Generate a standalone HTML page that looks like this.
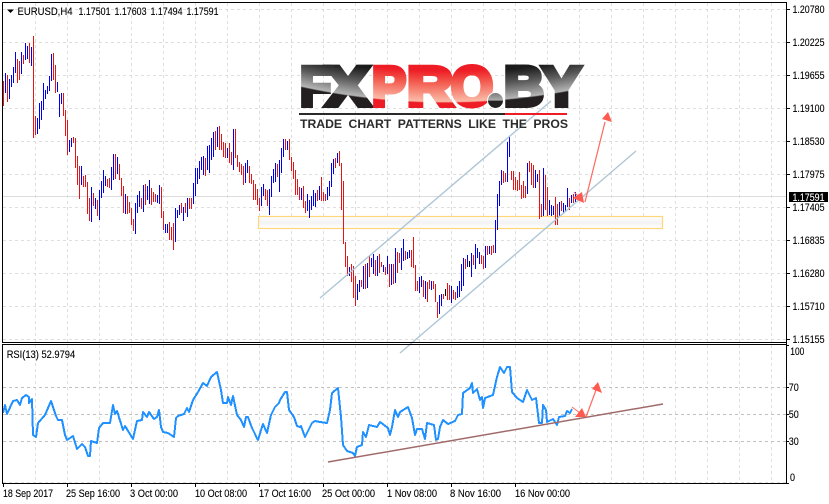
<!DOCTYPE html>
<html><head><meta charset="utf-8"><title>EURUSD H4</title>
<style>html,body{margin:0;padding:0;background:#fff;width:829px;height:504px;overflow:hidden}svg{display:block}text{font-family:"Liberation Sans",sans-serif;font-size:11.4px;fill:#000;stroke:#000;stroke-width:.12}</style></head>
<body>
<svg width="829" height="504" viewBox="0 0 829 504" xmlns="http://www.w3.org/2000/svg">
<defs>
<radialGradient id="gk" gradientUnits="userSpaceOnUse" cx="445" cy="-571" r="674"><stop offset=".955" stop-color="#1b1b1b"/><stop offset=".975" stop-color="#5a5a5a"/><stop offset=".998" stop-color="#b5b5b5"/><stop offset="1" stop-color="#231f20"/></radialGradient>
<radialGradient id="gr" gradientUnits="userSpaceOnUse" cx="445" cy="-571" r="674"><stop offset=".952" stop-color="#ee1c25"/><stop offset=".968" stop-color="#f2564a"/><stop offset=".998" stop-color="#fbbba8"/><stop offset="1" stop-color="#ee1c25"/></radialGradient>
<linearGradient id="gd" x1="0" y1="0" x2="0" y2="1"><stop offset="0" stop-color="#777"/><stop offset=".5" stop-color="#b0b0b0"/><stop offset=".52" stop-color="#222"/><stop offset="1" stop-color="#222"/></linearGradient>
<linearGradient id="gy" x1="0" y1="0" x2="0" y2="1"><stop offset="0" stop-color="#fff"/><stop offset=".5" stop-color="#f3f3f3"/><stop offset="1" stop-color="#fff"/></linearGradient>
</defs>
<!-- grid -->
<path d="M35.5 3V342M67.5 3V342M99.5 3V342M131.5 3V342M163.5 3V342M195.5 3V342M227.5 3V342M259.5 3V342M291.5 3V342M323.5 3V342M355.5 3V342M387.5 3V342M419.5 3V342M451.5 3V342M483.5 3V342M515.5 3V342M547.5 3V342M579.5 3V342M611.5 3V342M643.5 3V342M675.5 3V342M707.5 3V342M739.5 3V342M771.5 3V342M3 9.5H786M3 42.5H786M3 75.5H786M3 108.5H786M3 141.5H786M3 174.5H786M3 207.5H786M3 240.5H786M3 273.5H786M3 306.5H786M3 339.5H786" stroke="#dedede" fill="none" stroke-dasharray="3 3"/>
<path d="M35.5 345V483M67.5 345V483M99.5 345V483M131.5 345V483M163.5 345V483M195.5 345V483M227.5 345V483M259.5 345V483M291.5 345V483M323.5 345V483M355.5 345V483M387.5 345V483M419.5 345V483M451.5 345V483M483.5 345V483M515.5 345V483M547.5 345V483M579.5 345V483M611.5 345V483M643.5 345V483M675.5 345V483M707.5 345V483M739.5 345V483M771.5 345V483M3 482.5H786" stroke="#dedede" fill="none" stroke-dasharray="3 3"/>
<path d="M3 387.5H786M3 414.5H786M3 441.5H786" stroke="#c0c0c0" fill="none" stroke-dasharray="3 3"/>
<path d="M3 196.5H786" stroke="#dcdcdc"/>
<rect x="258.5" y="216.5" width="404" height="12" fill="url(#gy)" stroke="#ffd77a" stroke-width="1.2"/>
<!-- bars -->
<g fill="none" shape-rendering="crispEdges">
<path stroke="#0000f0" d="M5.5 73V93M9.5 79V99M11.5 75V87M13.5 67V83M15.5 52V73M21.5 52V74M25.5 43V60M27.5 46V59M31.5 47V66M37.5 118V134M39.5 103V129M41.5 101V120M43.5 83V110M45.5 90V99M47.5 86V94M49.5 76V91M51.5 54V81M57.5 82V92M59.5 94V117M61.5 93V104M69.5 140V152M71.5 138V147M81.5 166V185M91.5 187V222M95.5 198V209M99.5 190V220M101.5 181V198M103.5 170V193M105.5 176V186M111.5 167V190M113.5 154V180M117.5 157V174M125.5 194V214M135.5 203V234M137.5 195V213M139.5 191V207M143.5 185V212M147.5 186V200M149.5 180V204M157.5 195V203M159.5 185V204M165.5 224V233M167.5 224V233M175.5 208V242M177.5 210V218M179.5 205V215M183.5 207V221M187.5 198V217M193.5 183V204M195.5 168V196M197.5 168V184M199.5 161V179M201.5 157V170M203.5 156V175M207.5 146V170M209.5 145V173M211.5 138V160M213.5 132V157M217.5 127V147M227.5 148V158M233.5 129V170M245.5 163V183M247.5 160V173M261.5 187V206M263.5 184V196M269.5 189V215M271.5 176V197M273.5 169V183M275.5 163V182M279.5 160V192M281.5 148V173M283.5 139V157M287.5 141V150M301.5 188V200M307.5 194V211M309.5 200V218M311.5 196V210M313.5 190V206M315.5 193V207M319.5 186V200M327.5 187V200M329.5 181V196M331.5 163V187M333.5 159V174M337.5 153V163M349.5 267V276M357.5 284V300M359.5 280V292M363.5 266V289M367.5 263V288M371.5 258V267M373.5 254V274M377.5 256V276M383.5 265V272M387.5 256V274M391.5 264V285M395.5 248V283M401.5 248V270M403.5 239V261M407.5 252V259M409.5 250V258M419.5 277V293M421.5 276V287M425.5 281V299M431.5 281V290M439.5 295V314M441.5 294V306M451.5 286V303M457.5 286V298M459.5 281V297M461.5 264V291M463.5 258V286M467.5 255V267M471.5 253V277M475.5 244V269M477.5 248V258M479.5 252V264M485.5 246V268M489.5 246V254M495.5 220V253M497.5 194V230M499.5 181V206M501.5 170V185M507.5 142V182M509.5 137V157M527.5 163V194M535.5 170V188M537.5 174V182M543.5 168V216M549.5 200V215M551.5 205V216M553.5 206V215M559.5 202V216M563.5 203V213M565.5 205V212M567.5 188V207M571.5 195V203M575.5 192V202"/>
<path stroke="#e61414" d="M3.5 81V106M7.5 75V102M17.5 59V83M19.5 61V80M23.5 55V64M29.5 43V63M33.5 36V138M35.5 116V135M53.5 53V80M55.5 65V93M63.5 93V116M65.5 110V136M67.5 120V155M73.5 137V143M75.5 138V168M77.5 156V185M79.5 166V199M83.5 176V187M85.5 175V187M87.5 182V214M89.5 198V221M93.5 193V206M97.5 200V216M107.5 179V187M109.5 178V188M115.5 154V179M119.5 164V180M121.5 178V196M123.5 186V213M127.5 196V214M129.5 202V213M131.5 208V225M133.5 219V231M141.5 198V209M145.5 184V205M151.5 188V205M153.5 192V202M155.5 194V202M161.5 187V218M163.5 211V230M169.5 222V240M171.5 227V240M173.5 223V250M181.5 203V213M185.5 203V213M189.5 198V209M191.5 198V209M205.5 158V176M215.5 131V150M219.5 126V150M221.5 134V150M223.5 142V157M225.5 143V158M229.5 143V163M231.5 152V165M235.5 129V158M237.5 155V167M239.5 162V172M241.5 164V175M243.5 166V185M249.5 166V183M251.5 174V184M253.5 180V200M255.5 184V200M257.5 189V205M259.5 198V211M265.5 189V200M267.5 190V206M277.5 164V177M285.5 139V150M289.5 139V160M291.5 157V171M293.5 162V179M295.5 170V195M297.5 179V195M299.5 187V200M303.5 186V208M305.5 201V213M317.5 190V201M321.5 177V201M323.5 192V201M325.5 194V201M335.5 158V168M339.5 151V166M341.5 163V210M343.5 181V244M345.5 242V267M347.5 256V276M351.5 264V282M353.5 266V298M355.5 276V306M361.5 280V287M365.5 264V289M369.5 256V277M375.5 260V276M379.5 254V273M381.5 262V267M385.5 267V275M389.5 264V287M393.5 264V284M397.5 252V273M399.5 253V263M405.5 251V260M411.5 250V267M413.5 237V268M415.5 265V291M417.5 281V291M423.5 280V297M427.5 282V302M429.5 280V289M433.5 281V289M435.5 284V302M437.5 302V318M443.5 294V299M447.5 283V300M449.5 285V300M453.5 290V299M455.5 292V300M465.5 259V269M473.5 255V265M481.5 255V264M483.5 256V269M487.5 246V255M491.5 246V255M493.5 245V253M503.5 171V183M505.5 173V182M511.5 171V180M513.5 171V190M515.5 177V190M517.5 180V191M519.5 172V190M521.5 185V199M523.5 181V198M525.5 186V198M529.5 161V172M531.5 163V185M533.5 165V188M539.5 170V219M541.5 204V217M545.5 175V210M547.5 187V216M555.5 197V225M557.5 204V225M561.5 201V211M569.5 198V210M573.5 194V203"/>
<path stroke="#000" d="M445.5 289V296M469.5 261V267"/>
</g>
<!-- channel lines -->
<path d="M320 298L551 101M400 353L636 151" stroke="#aec6d6" stroke-width="1.4" fill="none"/>
<!-- logo -->
<g>
<text x="300" y="105.5" textLength="31" lengthAdjust="spacingAndGlyphs" style="fill:url(#gk);stroke:url(#gk);stroke-width:5;font-size:56px;font-weight:700">F</text>
<text x="326" y="105.5" textLength="44" lengthAdjust="spacingAndGlyphs" style="fill:url(#gk);stroke:url(#gk);stroke-width:5;font-size:56px;font-weight:700">X</text>
<text x="372" y="105.5" textLength="34" lengthAdjust="spacingAndGlyphs" style="fill:url(#gr);stroke:url(#gr);stroke-width:5;font-size:56px;font-weight:700">P</text>
<text x="407" y="105.5" textLength="46" lengthAdjust="spacingAndGlyphs" style="fill:url(#gr);stroke:url(#gr);stroke-width:5;font-size:56px;font-weight:700">R</text>
<text x="451" y="105.5" textLength="42" lengthAdjust="spacingAndGlyphs" style="fill:url(#gr);stroke:url(#gr);stroke-width:5;font-size:56px;font-weight:700">O</text>
<text x="504" y="105.5" textLength="40" lengthAdjust="spacingAndGlyphs" style="fill:url(#gk);stroke:url(#gk);stroke-width:5;font-size:56px;font-weight:700">B</text>
<text x="542" y="105.5" textLength="39" lengthAdjust="spacingAndGlyphs" style="fill:url(#gk);stroke:url(#gk);stroke-width:5;font-size:56px;font-weight:700">Y</text>
<circle cx="495.5" cy="100.5" r="8" fill="url(#gd)" stroke="#fff" stroke-width="1"/>
<rect x="299" y="113" width="206" height="2" fill="#2a2a2a"/>
<rect x="505" y="113" width="62" height="2" fill="#ee1c25"/>
<text x="300" y="128" textLength="268" lengthAdjust="spacingAndGlyphs" style="font-size:11.8px;font-weight:700;fill:#2b2b2b;stroke:none;word-spacing:3px">TRADE CHART PATTERNS LIKE THE PROS</text>
</g>
<!-- arrows main -->
<g fill="#ff5a50" stroke="none">
<path d="M574 192L583 201" stroke="#ff6a60" stroke-width="1"/>
<path d="M573 198L582 192L584 203Z"/>
<path d="M585 202L605 122" stroke="#ff6a60" stroke-width="1.2" fill="none"/>
<path d="M602 119L608 112L612 122Z"/>
<path d="M572 407L584 416" stroke="#ff6a60" stroke-width="1" fill="none"/>
</g>
<!-- rsi -->
<path d="M3 413L5 405L7 414L13 401L17 400L20 405L22 398L26 395L29 397L29 403L32 399L33 435L36 437L38 423L45 415L51 401L56 416L58 420L62 420L65 435L67 440L73 436L77 449L82 444L85 447L88 456L90 456L91 441L97 443L99 428L103 423L110 423L113 405L115 414L117 411L123 430L125 426L133 439L137 421L142 420L143 412L147 417L149 412L154 419L157 417L159 410L161 427L163 432L168 433L174 437L176 418L178 416L184 414L187 408L189 412L193 400L198 392L203 383L207 386L211 377L217 372L221 390L223 403L227 403L228 397L231 405L233 396L237 415L241 420L244 427L246 417L248 417L252 428L258 440L262 427L263 424L267 433L271 415L275 407L279 403L280 400L285 392L287 392L289 410L294 417L297 426L300 427L301 426L305 437L312 423L315 421L320 422L327 423L330 410L332 393L338 388L341 417L343 445L347 451L353 453L355 456L357 447L362 445L363 432L366 437L369 425L377 427L380 422L388 428L390 435L392 427L395 410L398 417L400 412L408 407L412 418L415 435L417 429L422 429L425 439L427 423L434 425L436 440L438 439L440 427L443 420L448 424L455 421L458 415L462 414L463 393L470 388L472 383L473 393L477 389L480 400L482 397L483 408L485 398L493 395L497 377L500 367L504 373L507 367L510 367L512 392L517 398L523 402L527 390L532 400L536 398L539 423L542 423L543 405L546 410L547 422L553 419L557 425L559 417L565 416L567 411L570 413L572 409" fill="none" stroke="#1e90ff" stroke-width="2" stroke-linejoin="round" shape-rendering="crispEdges"/>
<path d="M328 462L663 404" stroke="#a06a6a" stroke-width="1.5" fill="none"/>
<g fill="#ff5a50">
<path d="M575 417L582 408L586 417Z"/>
<path d="M586 417L596 390" stroke="#ff6a60" stroke-width="1.2" fill="none"/>
<path d="M592 389L598 382L602 393Z"/>
</g>
<!-- frame -->
<g fill="#000" shape-rendering="crispEdges">
<rect x="2" y="2" width="785" height="1"/>
<rect x="2" y="2" width="1" height="341"/>
<rect x="786" y="2" width="1" height="482"/>
<rect x="2" y="342" width="785" height="1"/>
<rect x="2" y="344" width="785" height="1"/>
<rect x="2" y="344" width="1" height="140"/>
<rect x="2" y="483" width="785" height="1"/>
</g>
<!-- ticks -->
<path d="M787 9.5h3M787 42.5h3M787 75.5h3M787 108.5h3M787 141.5h3M787 174.5h3M787 207.5h3M787 240.5h3M787 273.5h3M787 306.5h3M787 339.5h3M787 345.5h2M787 387.5h2M787 414.5h2M787 441.5h2M787 483.5h2M3.5 484v3M67.5 484v3M131.5 484v3M195.5 484v3M259.5 484v3M323.5 484v3M387.5 484v3M451.5 484v3M515.5 484v3" stroke="#000" shape-rendering="crispEdges"/>
<!-- top text -->
<path d="M7 9.5h7l-3.5 3.5z" fill="#000"/>
<text x="17.5" y="15" textLength="55" lengthAdjust="spacingAndGlyphs">EURUSD,H4</text>
<text x="78.5" y="15" textLength="32" lengthAdjust="spacingAndGlyphs">1.17501</text>
<text x="114.5" y="15" textLength="32" lengthAdjust="spacingAndGlyphs">1.17603</text>
<text x="150.5" y="15" textLength="32" lengthAdjust="spacingAndGlyphs">1.17494</text>
<text x="186.5" y="15" textLength="32" lengthAdjust="spacingAndGlyphs">1.17591</text>
<text x="6.7" y="358" textLength="68.5" lengthAdjust="spacingAndGlyphs">RSI(13) 52.9794</text>
<!-- right axis -->
<g>
<text x="792.5" y="13" textLength="32" lengthAdjust="spacingAndGlyphs">1.20780</text>
<text x="792.5" y="46" textLength="32" lengthAdjust="spacingAndGlyphs">1.20225</text>
<text x="792.5" y="79" textLength="32" lengthAdjust="spacingAndGlyphs">1.19655</text>
<text x="792.5" y="112" textLength="32" lengthAdjust="spacingAndGlyphs">1.19100</text>
<text x="792.5" y="145" textLength="32" lengthAdjust="spacingAndGlyphs">1.18530</text>
<text x="792.5" y="178" textLength="32" lengthAdjust="spacingAndGlyphs">1.17975</text>
<text x="792.5" y="211" textLength="32" lengthAdjust="spacingAndGlyphs">1.17405</text>
<text x="792.5" y="244" textLength="32" lengthAdjust="spacingAndGlyphs">1.16835</text>
<text x="792.5" y="277" textLength="32" lengthAdjust="spacingAndGlyphs">1.16280</text>
<text x="792.5" y="310" textLength="32" lengthAdjust="spacingAndGlyphs">1.15710</text>
<text x="792.5" y="343" textLength="32" lengthAdjust="spacingAndGlyphs">1.15155</text>
<rect x="789" y="192" width="39" height="10" fill="#000"/>
<text x="792.5" y="201" textLength="32" lengthAdjust="spacingAndGlyphs" style="fill:#fff;stroke:#fff">1.17591</text>
<text x="790.3" y="355" textLength="14" lengthAdjust="spacingAndGlyphs">100</text>
<text x="788.7" y="391" textLength="10" lengthAdjust="spacingAndGlyphs">70</text>
<text x="788.7" y="418" textLength="10" lengthAdjust="spacingAndGlyphs">50</text>
<text x="788.7" y="445" textLength="10" lengthAdjust="spacingAndGlyphs">30</text>
<text x="790" y="481" textLength="5" lengthAdjust="spacingAndGlyphs">0</text>
</g>
<!-- time axis -->
<g>
<text x="3" y="497" textLength="50" lengthAdjust="spacingAndGlyphs">18 Sep 2017</text>
<text x="66" y="497" textLength="54" lengthAdjust="spacingAndGlyphs">25 Sep 16:00</text>
<text x="130" y="497" textLength="48" lengthAdjust="spacingAndGlyphs">3 Oct 00:00</text>
<text x="195" y="497" textLength="52" lengthAdjust="spacingAndGlyphs">10 Oct 08:00</text>
<text x="259" y="497" textLength="52" lengthAdjust="spacingAndGlyphs">17 Oct 16:00</text>
<text x="322" y="497" textLength="53" lengthAdjust="spacingAndGlyphs">25 Oct 00:00</text>
<text x="387" y="497" textLength="50" lengthAdjust="spacingAndGlyphs">1 Nov 08:00</text>
<text x="450" y="497" textLength="51" lengthAdjust="spacingAndGlyphs">8 Nov 16:00</text>
<text x="515" y="497" textLength="55" lengthAdjust="spacingAndGlyphs">16 Nov 00:00</text>
</g>
</svg>
</body></html>
